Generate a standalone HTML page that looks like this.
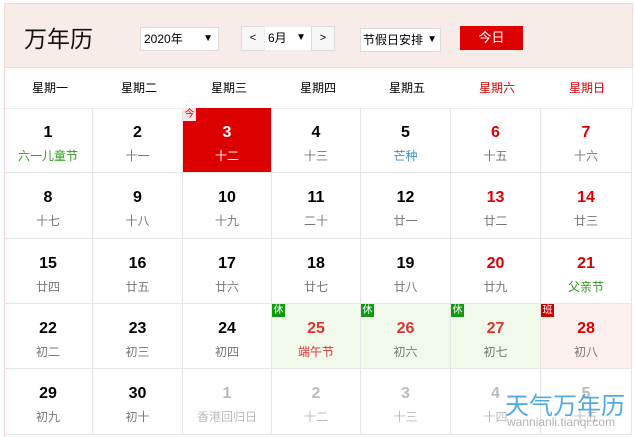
<!DOCTYPE html><html><head><meta charset="utf-8"><style>
*{margin:0;padding:0;box-sizing:border-box}
body{width:635px;height:437px;background:#fff;font-family:"Liberation Sans","Noto Sans CJK SC",sans-serif;position:relative;overflow:hidden}
.hd{position:absolute;left:4px;top:3px;width:629px;height:65px;background:#f8ece9;border:1px solid #f0dada}
.t{position:absolute;left:24px;top:20px;font-size:23px;color:#111}
.sel{position:absolute;background:#fff;border:1px solid #ddd;font-size:12px;color:#000;height:24px;line-height:22px;padding-left:3px}
.sel b{position:absolute;right:5px;top:0;font-size:10px;font-weight:normal}
.btn{position:absolute;background:#f6f6f6;border:1px solid #ddd;font-size:11px;text-align:center;height:25px;line-height:23px}
.today{position:absolute;left:460px;top:26px;width:63px;height:24px;background:#dd0000;color:#fff;font-size:13px;text-align:center;line-height:24px}
.wk{position:absolute;top:68px;left:4px;width:629px;height:41px;border-left:1px solid #f0d0d0;border-right:1px solid #eee;border-bottom:1px solid #eee}
.wk div{position:absolute;top:0;width:90px;text-align:center;line-height:40px;font-size:12px;color:#000}
.c{position:absolute;width:90px;height:66px;border-right:1px solid #e5e5e5;border-bottom:1px solid #e5e5e5;text-align:center}
.c .n{font-size:16px;font-weight:bold;margin-top:15px;line-height:20px;color:#000}
.c .l{font-size:12px;color:#777;margin-top:5px;line-height:16px}
.r .n{color:#dd0000}
.g .l{color:#2c9a1a}
.f .n,.f .l{color:#bbb}
.tag{position:absolute;left:0;top:0;width:13px;height:13px;font-size:10px;line-height:13px;color:#fff;text-align:center}
</style></head><body>
<div class="hd"></div>
<div class="t">万年历</div>
<div class="sel" style="left:140px;top:27px;width:79px">2020年<b>▼</b></div>
<div class="btn" style="left:241px;top:26px;width:24px">&lt;</div>
<div class="sel" style="left:264px;top:26px;width:48px;height:25px;border-color:#eee">6月<b>▼</b></div>
<div class="btn" style="left:311px;top:26px;width:24px">&gt;</div>
<div class="sel" style="left:360px;top:28px;width:81px;padding-left:2px">节假日安排<b style="right:3px">▼</b></div>
<div class="today">今日</div>
<div class="wk">
<div style="left:0">星期一</div><div style="left:89px">星期二</div><div style="left:179px">星期三</div><div style="left:268px">星期四</div><div style="left:357px">星期五</div><div style="left:447px;color:#dd0000">星期六</div><div style="left:537px;color:#dd0000">星期日</div>
</div>
<div style="position:absolute;left:4px;top:108px;width:1px;height:329px;background:#f0d0d0"></div>
<div id="g"></div>
<script>
var X=[4,93,183,272,361,451,541,632],Y=[108,173,239,304,369,435];
var d=[
[["1","六一儿童节","g"],["2","十一"],["3","十二","today"],["4","十三"],["5","芒种","b"],["6","十五","r"],["7","十六","r"]],
[["8","十七"],["9","十八"],["10","十九"],["11","二十"],["12","廿一"],["13","廿二","r"],["14","廿三","r"]],
[["15","廿四"],["16","廿五"],["17","廿六"],["18","廿七"],["19","廿八"],["20","廿九","r"],["21","父亲节","r g"]],
[["22","初二"],["23","初三"],["24","初四"],["25","端午节","rest fest"],["26","初六","rest"],["27","初七","rest"],["28","初八","work"]],
[["29","初九"],["30","初十"],["1","香港回归日","f"],["2","十二","f"],["3","十三","f"],["4","十四","f"],["5","十五","f"]]];
var h="";
for(var r=0;r<5;r++)for(var c=0;c<7;c++){var e=d[r][c],cl=e[2]||"",st="left:"+X[c]+"px;top:"+Y[r]+"px;width:"+(X[c+1]-X[c])+"px;height:"+(Y[r+1]-Y[r])+"px;";
var tag="",ns="",ls="";
if(cl.indexOf("today")>=0){st+="background:#dd0000;";ns="color:#fff";ls="color:#fff";tag='<div class="tag" style="background:#fbe9e9;color:#dd0000">今</div>';}
if(cl.indexOf("rest")>=0){st+="background:#f1f9ea;";tag='<div class="tag" style="background:#109a10">休</div>';ns="color:#dd3333";}
if(cl.indexOf("work")>=0){st+="background:#fbf0ee;";tag='<div class="tag" style="background:#cc0000">班</div>';ns="color:#dd0000";}
if(cl.indexOf("fest")>=0)ls="color:#dd3333";
if(cl.indexOf("b")==0)ls="color:#3a8fd0";
if(cl.indexOf("g")>=0)ls="color:#2c9a1a";
h+='<div class="c '+cl+'" style="'+st+'">'+tag+'<div class="n" style="'+ns+'">'+e[0]+'</div><div class="l" style="'+ls+'">'+e[1]+'</div></div>';}
document.getElementById("g").innerHTML=h;
</script>
<div style="position:absolute;left:505px;top:386px;font-size:24px;color:#3ea2e0;opacity:.9">天气万年历</div>
<div style="position:absolute;left:507px;top:415px;font-size:12px;color:#aaa;opacity:.9">wannianli.tianqi.com</div>
</body></html>
